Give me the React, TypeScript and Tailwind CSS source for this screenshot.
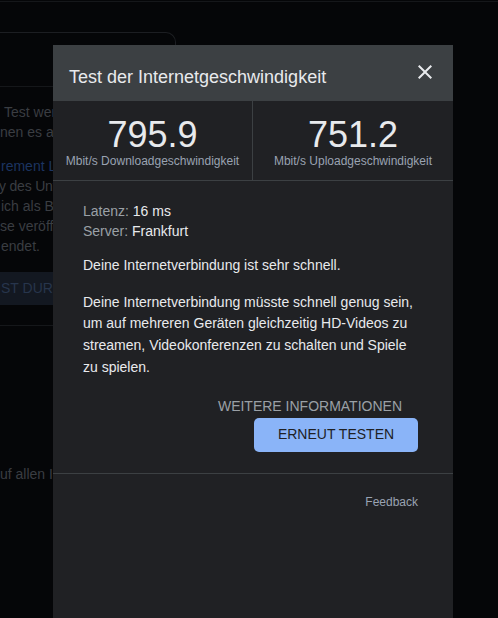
import React from "react";

export default function App() {
  return (
    <div
      className="relative w-[498px] h-[618px] overflow-hidden bg-[#050608] text-[14px]"
      style={{ fontFamily: '"Liberation Sans", Arial, sans-serif' }}
    >
      {/* underlying page (dimmed) */}
      <div className="flex flex-col">
        <div className="mt-px h-px bg-[#15171a]" />
        <div className="mt-[30px] w-[176px] h-[560px] border-t border-r border-[#1c1e22] rounded-tr-[10px] flex flex-col text-[#3a3d42]">
          <div className="h-[54px] border-b border-[#15171a]" />
          <div className="mt-[15px] leading-[20px] whitespace-nowrap">
            <div className="pl-[4px]">Test werden</div>
            <div>nen es auf</div>
            <div className="mt-[14px] pl-[1px] text-[#1c3460]">rement Lab</div>
            <div className="-ml-[1px] tracking-[-0.2px]">y des Unternehmens</div>
            <div className="pl-[1px]">ich als Beitrag</div>
            <div>se veröffentlicht</div>
            <div className="pl-[1px]">endet.</div>
          </div>
          <div className="mt-[16px] h-[33px] bg-[#131821] flex items-center pl-[1px] text-[14px] text-[#27354c] whitespace-nowrap">
            ST DURCHFÜHREN
          </div>
          <div className="mt-[20px] h-px bg-[#15171a]" />
          <div className="mt-[138px] leading-[20px] whitespace-nowrap">uf allen Internet</div>
        </div>
      </div>

      {/* modal */}
      <div className="absolute left-[53px] top-[45px] w-[400px] bottom-0 bg-[#202124] flex flex-col">
        <div className="h-[56px] bg-[#3c4043] flex items-start justify-between pl-[16px] pr-[16px]">
          <div className="mt-[20px] text-[18px] leading-[24px] text-[#e8eaed]">
            Test der Internetgeschwindigkeit
          </div>
          <svg
            className="mt-[15px]"
            width="24"
            height="24"
            viewBox="0 0 24 24"
            fill="#e8eaed"
          >
            <path d="M19 6.41 17.59 5 12 10.59 6.41 5 5 6.41 10.59 12 5 17.59 6.41 19 12 13.41 17.59 19 19 17.59 13.41 12z" />
          </svg>
        </div>

        <div className="grid grid-cols-2 border-b border-[#3c4043]">
          <div className="flex flex-col items-center pt-[16px] pb-[11px] border-r border-[#3c4043]">
            <div className="text-[36px] leading-[36px] text-[#e8eaed]">795.9</div>
            <div className="text-[12px] leading-[16px] text-[#9aa3b2]">Mbit/s Downloadgeschwindigkeit</div>
          </div>
          <div className="flex flex-col items-center pt-[16px] pb-[11px]">
            <div className="text-[36px] leading-[36px] text-[#e8eaed]">751.2</div>
            <div className="text-[12px] leading-[16px] text-[#9aa3b2]">Mbit/s Uploadgeschwindigkeit</div>
          </div>
        </div>

        <div className="pl-[30px] pr-[35px] pt-[20px] flex flex-col">
          <div className="leading-[20px]">
            <div>
              <span className="text-[#9aa0a6]">Latenz: </span>
              <span className="text-[#e8eaed]">16 ms</span>
            </div>
            <div>
              <span className="text-[#9aa0a6]">Server: </span>
              <span className="text-[#e8eaed]">Frankfurt</span>
            </div>
          </div>
          <div className="mt-[14px] leading-[21.7px] text-[#e8eaed]">
            Deine Internetverbindung ist sehr schnell.
          </div>
          <div className="mt-[15px] leading-[21.7px] text-[#e8eaed]">
            Deine Internetverbindung müsste schnell genug sein, um auf mehreren Geräten gleichzeitig HD-Videos zu streamen, Videokonferenzen zu schalten und Spiele zu spielen.
          </div>
          <div className="mt-[17px] flex justify-end">
            <div className="pr-[16px] leading-[20px] text-[#9aa0a6]">WEITERE INFORMATIONEN</div>
          </div>
          <div className="mt-[2px] flex justify-end">
            <div className="h-[34px] w-[164px] rounded-[5px] bg-[#8ab4f8] text-[#202124] flex items-center justify-center">
              ERNEUT TESTEN
            </div>
          </div>
        </div>

        <div className="mt-[21px] h-px bg-[#3c4043]" />
        <div className="pr-[35px] pt-[20px] flex justify-end">
          <div className="text-[12px] leading-[16px] text-[#9aa3b2]">Feedback</div>
        </div>
      </div>
    </div>
  );
}
